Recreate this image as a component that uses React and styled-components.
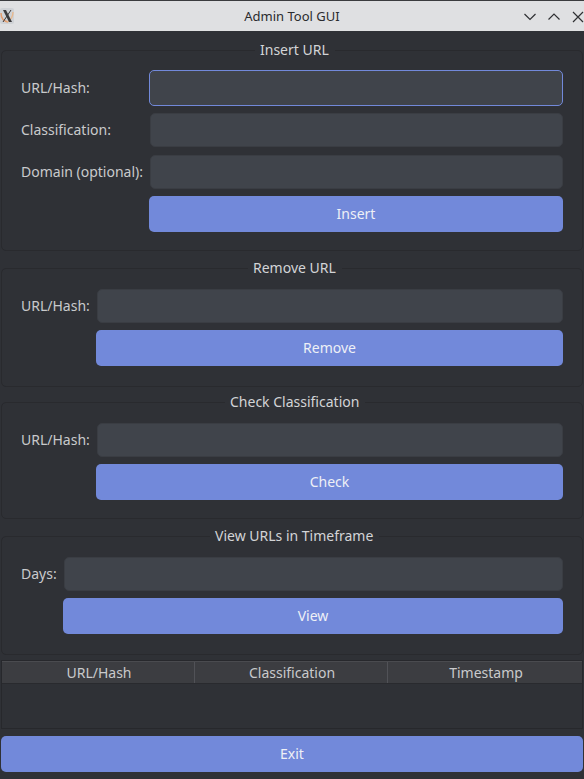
import React from "react";
import styled, { createGlobalStyle } from "styled-components";

const GlobalStyle = createGlobalStyle`
  html, body {
    margin: 0;
    padding: 0;
    background: #2f3136;
  }
  * {
    box-sizing: border-box;
  }
`;

const Window = styled.div`
  width: 584px;
  height: 779px;
  overflow: hidden;
  display: flex;
  flex-direction: column;
  background: #2f3136;
  color: #d3d4d6;
  font-family: "Noto Sans", sans-serif;
  font-size: 14px;
`;

const TitleBar = styled.div`
  height: 31px;
  flex: none;
  border-top: 1px solid #3a3b3e;
  background: #dfe0e2;
  display: flex;
  align-items: center;
  position: relative;
  color: #2a2b2e;
  font-size: 13px;
`;

const TitleIcon = styled.div`
  width: 14px;
  height: 16px;
  margin-top: -1px;
  background: #cfd2d6;
  border-radius: 2px;
  display: flex;
  align-items: center;
  justify-content: center;
`;

const TitleText = styled.div`
  flex: 1;
  text-align: center;
  margin-right: 14px;
`;

const WindowButtons = styled.div`
  position: absolute;
  right: 0;
  top: 9px;
  display: flex;
  gap: 12px;
`;

const Content = styled.div`
  flex: 1;
  display: flex;
  flex-direction: column;
  padding: 10px 1px 7px;
`;

const Group = styled.fieldset`
  margin: 0 0 ${(p) => p.$after}px;
  padding: 0 19px 18px;
  height: ${(p) => p.$height}px;
  border: 1px solid #292a2e;
  border-radius: 5px;
  min-width: 0;
`;

const Legend = styled.legend`
  margin: 0 auto 0 ${(p) => p.$left}px;
  padding: 0 6px 0 5px;
  line-height: 18px;
  font-size: 14px;
  color: #d3d4d6;
`;

const Form = styled.div`
  display: grid;
  grid-template-columns: ${(p) => p.$label}px 1fr;
  column-gap: 7px;
  row-gap: 7px;
  align-items: center;
  padding-top: ${(p) => p.$top}px;
`;

const Label = styled.label`
  color: #c9cacc;
  white-space: nowrap;
  line-height: 34px;
  margin-bottom: ${(p) => p.$extra || 0}px;
`;

const Input = styled.input`
  height: ${(p) => (p.$focus ? 36 : 34)}px;
  width: ${(p) => (p.$focus ? "100%" : "calc(100% - 1px)")};
  margin: 0 0 ${(p) => p.$extra || 0}px ${(p) => (p.$focus ? 0 : 1)}px;
  background: #40444b;
  border: 1px solid ${(p) => (p.$focus ? "#7289da" : "#3a3d43")};
  border-radius: 5px;
  outline: none;
`;

const Button = styled.button`
  height: 36px;
  width: 100%;
  border: none;
  border-radius: 5px;
  background: #7289da;
  color: #eef0f6;
  font-family: inherit;
  font-size: 14px;
  padding: 0 0 2px;
`;

const FormButton = styled(Button)`
  grid-column: 2;
`;

const Table = styled.div`
  height: 69px;
  flex: none;
  border: 1px solid #27282c;
  margin-bottom: 7px;
`;

const HeaderRow = styled.div`
  height: 23px;
  display: grid;
  grid-template-columns: 193px 193px 1fr;
  background: #3c3d41;
  border-bottom: 1px solid #292a2e;
  border-top: 1px solid #4a4b4f;
`;

const HeaderCell = styled.div`
  text-align: center;
  line-height: 21px;
  color: #c9cacc;
  padding-left: 2px;
  border-right: 1px solid #515257;
  &:last-child {
    border-right: none;
  }
`;

const XLogo = () => (
  <svg width="14" height="14" viewBox="0 0 14 14">
    <path d="M1 4 C1 8 3 12 8 13" stroke="#e39a6a" strokeWidth="1.4" fill="none" />
    <path d="M13 3 C13 7 11 11 7 13" stroke="#e8b98f" strokeWidth="1.4" fill="none" />
    <path d="M3 1 L6 1 L12 13 L9 13 Z" fill="#3a3a3c" />
    <path d="M11 1 L3 13" stroke="#3a3a3c" strokeWidth="1" />
  </svg>
);

const WinIcon = ({ d }) => (
  <svg width="12" height="14" viewBox="0 0 12 14" fill="none" stroke="#2f3033" strokeWidth="1.2">
    <path d={d} />
  </svg>
);

const sections = [
  {
    title: "Insert URL",
    legendLeft: 234,
    label: 121,
    height: 210,
    after: 8,
    top: 11,
    fields: [{ name: "URL/Hash:", focus: true }, { name: "Classification:", extra: 1 }, { name: "Domain (optional):" }],
    action: "Insert",
  },
  {
    title: "Remove URL",
    legendLeft: 227,
    label: 68,
    height: 128,
    after: 6,
    top: 12,
    fields: [{ name: "URL/Hash:" }],
    action: "Remove",
  },
  {
    title: "Check Classification",
    legendLeft: 204,
    label: 68,
    height: 126,
    after: 8,
    top: 12,
    fields: [{ name: "URL/Hash:" }],
    action: "Check",
  },
  {
    title: "View URLs in Timeframe",
    legendLeft: 189,
    label: 35,
    height: 128,
    after: 5,
    top: 12,
    fields: [{ name: "Days:" }],
    action: "View",
  },
];

export default function App() {
  return (
    <Window>
      <GlobalStyle />
      <TitleBar>
        <TitleIcon>
          <XLogo />
        </TitleIcon>
        <TitleText>Admin Tool GUI</TitleText>
        <WindowButtons>
          <WinIcon d="M0.5 4 L6 9.5 L11.5 4" />
          <WinIcon d="M0.5 9.5 L6 4 L11.5 9.5" />
          <WinIcon d="M1 2 L11 12 M11 2 L1 12" />
        </WindowButtons>
      </TitleBar>
      <Content>
        {sections.map((s) => (
          <Group key={s.title} $height={s.height} $after={s.after}>
            <Legend $left={s.legendLeft}>{s.title}</Legend>
            <Form $label={s.label} $top={s.top}>
              {s.fields.map((f) => (
                <React.Fragment key={f.name}>
                  <Label $extra={f.extra}>{f.name}</Label>
                  <Input $focus={f.focus} $extra={f.extra} />
                </React.Fragment>
              ))}
              <FormButton>{s.action}</FormButton>
            </Form>
          </Group>
        ))}
        <Table>
          <HeaderRow>
            <HeaderCell>URL/Hash</HeaderCell>
            <HeaderCell>Classification</HeaderCell>
            <HeaderCell>Timestamp</HeaderCell>
          </HeaderRow>
        </Table>
        <Button>Exit</Button>
      </Content>
    </Window>
  );
}
